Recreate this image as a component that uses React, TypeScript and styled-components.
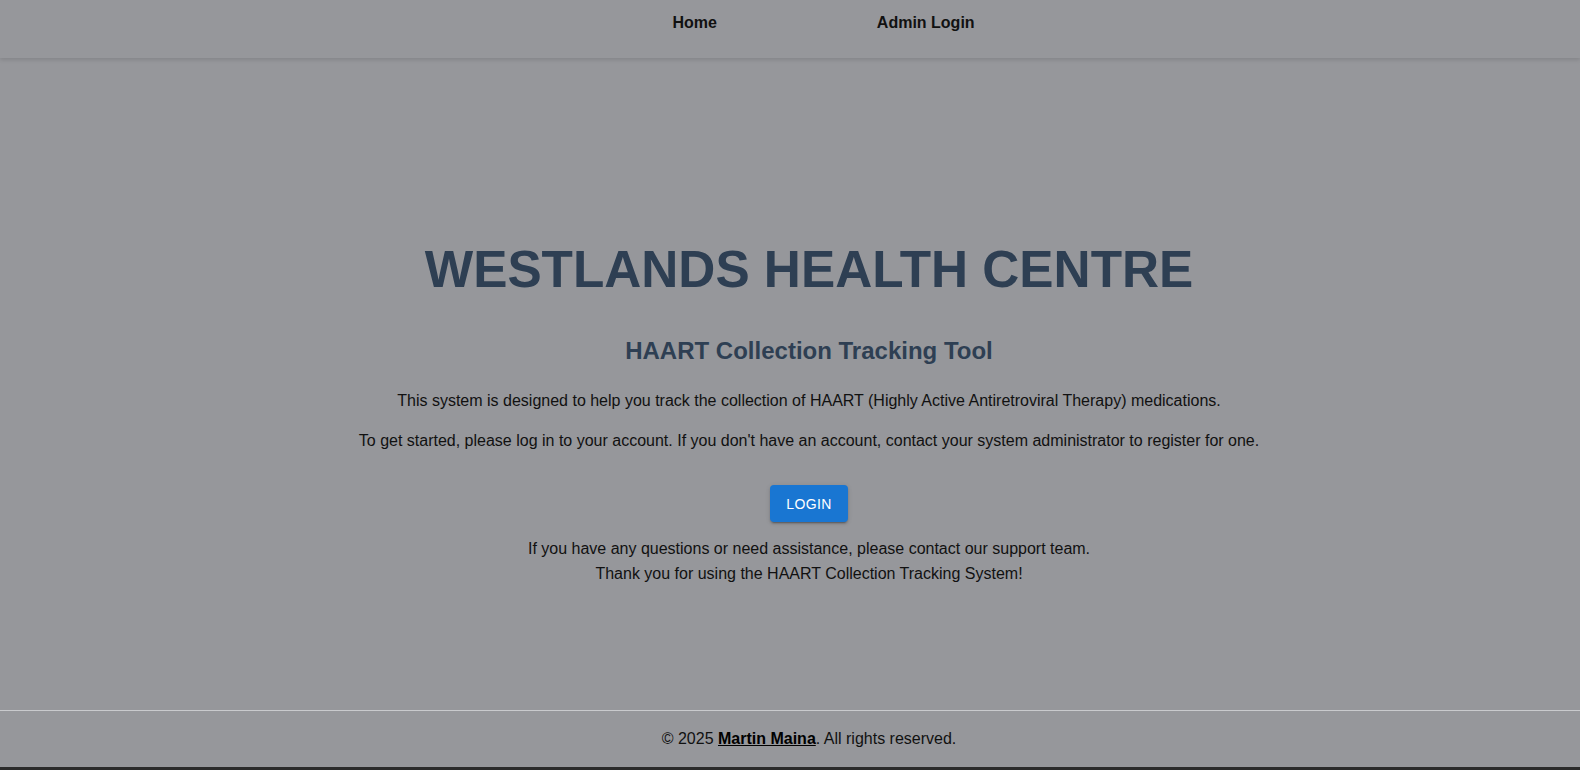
import React from "react";
import styled, { createGlobalStyle } from "styled-components";

const GlobalStyle = createGlobalStyle`
  html, body {
    margin: 0;
    padding: 0;
    background: #96979b;
    font-family: "Liberation Sans", Arial, sans-serif;
    color: #111;
  }
  * { box-sizing: border-box; }
`;

const Page = styled.div`
  display: flex;
  flex-direction: column;
  height: 770px;
  overflow: hidden;
  background: #96979b;
`;

const Header = styled.header`
  height: 58px;
  flex: 0 0 58px;
  display: flex;
  justify-content: center;
  align-items: flex-start;
  padding: 14px 0 0 67px;
  gap: 160px;
  box-shadow: 0 2px 4px rgba(0, 0, 0, 0.12);
  position: relative;
  z-index: 1;
`;

const NavLink = styled.a`
  font-size: 16px;
  line-height: 18px;
  font-weight: bold;
  color: #111;
  text-decoration: none;
  cursor: pointer;
`;

const Main = styled.main`
  flex: 1;
  display: flex;
  flex-direction: column;
  align-items: center;
  padding: 183px 0 0 38px;
  text-align: center;
`;

const Title = styled.h1`
  margin: 0;
  font-size: 51.3px;
  line-height: 58px;
  font-weight: bold;
  color: #2e3f53;
`;

const Subtitle = styled.h2`
  margin: 38px 0 0;
  font-size: 24px;
  line-height: 28px;
  font-weight: bold;
  color: #2e3f53;
`;

const Text = styled.p<{ $mt: number }>`
  margin: ${(p) => p.$mt}px 0 0;
  font-size: 16px;
  line-height: 18px;
  color: #111;
`;

const LoginButton = styled.button`
  margin-top: 35px;
  height: 37px;
  padding: 0 16px;
  border: none;
  border-radius: 4px;
  background: #1976d2;
  color: #fff;
  font-family: "Liberation Sans", Arial, sans-serif;
  font-weight: 400;
  font-size: 14px;
  letter-spacing: 0.4px;
  text-transform: uppercase;
  box-shadow: 0 3px 1px -2px rgba(0, 0, 0, 0.2), 0 2px 2px 0 rgba(0, 0, 0, 0.14),
    0 1px 5px 0 rgba(0, 0, 0, 0.12);
  cursor: pointer;
`;

const Closing = styled.div`
  margin-top: 15px;
  font-size: 16px;
  line-height: 24.5px;
  color: #111;
`;

const Footer = styled.footer`
  flex: 0 0 57px;
  border-top: 1px solid #c9cacd;
  display: flex;
  justify-content: center;
  padding: 19px 0 0 38px;
  font-size: 16px;
  line-height: 18px;
  color: #111;
`;

const Author = styled.a`
  color: #000;
  font-weight: bold;
  text-decoration: underline;
`;

const BottomBar = styled.div`
  flex: 0 0 3px;
  background: #2b2b2b;
`;

export default function App() {
  return (
    <>
      <GlobalStyle />
      <Page>
        <Header>
          <NavLink>Home</NavLink>
          <NavLink>Admin Login</NavLink>
        </Header>
        <Main>
          <Title>WESTLANDS HEALTH CENTRE</Title>
          <Subtitle>HAART Collection Tracking Tool</Subtitle>
          <Text $mt={27}>
            This system is designed to help you track the collection of HAART (Highly Active
            Antiretroviral Therapy) medications.
          </Text>
          <Text $mt={22}>
            To get started, please log in to your account. If you don't have an account, contact
            your system administrator to register for one.
          </Text>
          <LoginButton>Login</LoginButton>
          <Closing>
            If you have any questions or need assistance, please contact our support team.
            <br />
            Thank you for using the HAART Collection Tracking System!
          </Closing>
        </Main>
        <Footer>
          <span>
            © 2025 <Author>Martin Maina</Author>. All rights reserved.
          </span>
        </Footer>
        <BottomBar />
      </Page>
    </>
  );
}
